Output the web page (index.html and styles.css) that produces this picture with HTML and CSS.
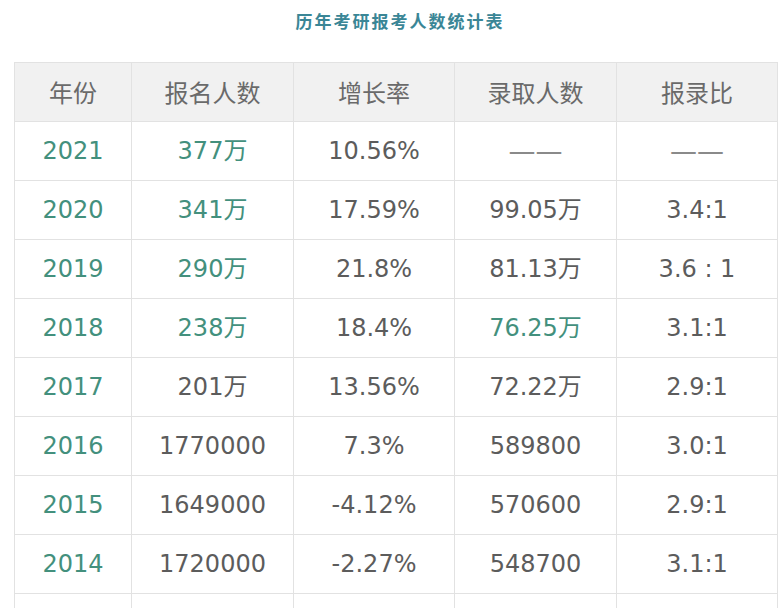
FILE: index.html
```html
<!DOCTYPE html>
<html lang="zh-CN">
<head>
<meta charset="utf-8">
<title>历年考研报考人数统计表</title>
<link rel="stylesheet" href="styles.css">
</head>
<body>
<div class="page">
  <h1 class="title">历年考研报考人数统计表</h1>
  <table class="stats">
    <colgroup>
      <col class="c1"><col class="c2"><col class="c3"><col class="c4"><col class="c5">
    </colgroup>
    <thead>
      <tr><th>年份</th><th>报名人数</th><th>增长率</th><th>录取人数</th><th>报录比</th></tr>
    </thead>
    <tbody>
      <tr><td class="g">2021</td><td class="g">377万</td><td>10.56%</td><td class="dash">——</td><td class="dash">——</td></tr>
      <tr><td class="g">2020</td><td class="g">341万</td><td>17.59%</td><td>99.05万</td><td>3.4:1</td></tr>
      <tr><td class="g">2019</td><td class="g">290万</td><td>21.8%</td><td>81.13万</td><td>3.6 : 1</td></tr>
      <tr><td class="g">2018</td><td class="g">238万</td><td>18.4%</td><td class="g">76.25万</td><td>3.1:1</td></tr>
      <tr><td class="g">2017</td><td>201万</td><td>13.56%</td><td>72.22万</td><td>2.9:1</td></tr>
      <tr><td class="g">2016</td><td>1770000</td><td>7.3%</td><td>589800</td><td>3.0:1</td></tr>
      <tr><td class="g">2015</td><td>1649000</td><td>-4.12%</td><td>570600</td><td>2.9:1</td></tr>
      <tr><td class="g">2014</td><td>1720000</td><td>-2.27%</td><td>548700</td><td>3.1:1</td></tr>
      <tr><td></td><td></td><td></td><td></td><td></td></tr>
    </tbody>
  </table>
</div>
</body>
</html>
```
FILE: styles.css
```css
html, body {
  margin: 0;
  padding: 0;
  background: #ffffff;
  overflow: hidden;
}
.page {
  width: 780px;
  height: 608px;
  overflow: hidden;
}
.title {
  margin: 0;
  height: 62px;
  padding-top: 9px;
  box-sizing: border-box;
  text-align: center;
  font-family: "Noto Sans CJK SC", sans-serif;
  font-weight: 700;
  font-size: 17px;
  line-height: 24px;
  letter-spacing: 2px;
  color: #3a8696;
  padding-left: 20px;
}
.stats {
  margin-left: 14px;
  border-collapse: collapse;
  table-layout: fixed;
  width: 763px;
  font-family: "DejaVu Sans", "Noto Sans CJK SC", sans-serif;
  font-size: 24px;
  color: #5c5c5c;
}
.c1 { width: 117px; }
.c2 { width: 162px; }
.c3 { width: 161px; }
.c4 { width: 162px; }
.c5 { width: 161px; }
.stats th, .stats td {
  border: 1px solid #e2e2e2;
  height: 58px;
  padding: 0;
  text-align: center;
  vertical-align: middle;
  line-height: 30px;
}
.stats th {
  background: #f1f1f1;
  font-family: "Noto Sans CJK SC", sans-serif;
  font-weight: 400;
  color: #6a6a6a;
}
.stats td.g {
  color: #43907d;
}
.stats td.dash {
  color: #8a8a8a;
  font-size: 27px;
}
```
